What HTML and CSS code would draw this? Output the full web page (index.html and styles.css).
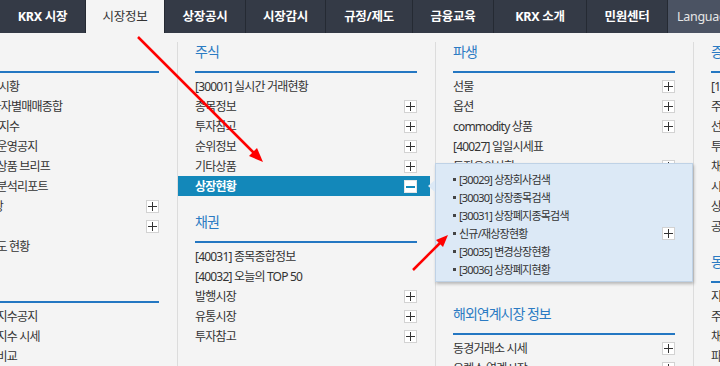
FILE: index.html
```html
<!DOCTYPE html>
<html lang="ko">
<head>
  <meta charset="UTF-8">
  <title>KRX 시장정보</title>
  <link rel="stylesheet" href="styles.css">
</head>
<body>

  <ul class="gnb">
    <li><a>KRX 시장</a></li>
    <li class="on"><a>시장정보</a></li>
    <li><a>상장공시</a></li>
    <li><a>시장감시</a></li>
    <li><a>규정/제도</a></li>
    <li><a>금융교육</a></li>
    <li><a>KRX 소개</a></li>
    <li><a>민원센터</a></li>
    <li class="lang"><a>Language</a></li>
  </ul>

  <div class="submenu">
    <div class="col">
      <div class="group">
        <h3>시장현황</h3>
        <ul>
          <li>[11001] 증시 시황</li>
          <li>시장전체 투자자별매매종합</li>
          <li>[11003] 주요 지수</li>
          <li>[11004] 지수운영공지</li>
          <li>[11005] 파생상품 브리프</li>
          <li>[11006] 시장분석리포트</li>
          <li>해외 주요 시장<i class="tg"></i></li>
          <li>통계정보<i class="tg"></i></li>
          <li>[11009] 공매도 현황</li>
        </ul>
      </div>
      <div class="group">
        <h3>지수</h3>
        <ul>
          <li>[11011] 신규지수공지</li>
          <li>[11012] 해외지수 시세</li>
          <li>[11013] 지수비교</li>
        </ul>
      </div>
    </div>

    <div class="col">
      <div class="group">
        <h3>주식</h3>
        <ul>
          <li>[30001] 실시간 거래현황</li>
          <li>종목정보<i class="tg"></i></li>
          <li>투자참고<i class="tg"></i></li>
          <li>순위정보<i class="tg"></i></li>
          <li>기타상품<i class="tg"></i></li>
          <li class="active">상장현황<i class="tg minus"></i>
            <div class="layer">
              <ul>
                <li>[30029] 상장회사검색</li>
                <li>[30030] 상장종목검색</li>
                <li>[30031] 상장폐지종목검색</li>
                <li>신규/재상장현황<i class="tg"></i></li>
                <li>[30035] 변경상장현황</li>
                <li>[30036] 상장폐지현황</li>
              </ul>
            </div>
          </li>
        </ul>
      </div>
      <div class="group">
        <h3>채권</h3>
        <ul>
          <li>[40031] 종목종합정보</li>
          <li>[40032] 오늘의 TOP 50</li>
          <li>발행시장<i class="tg"></i></li>
          <li>유통시장<i class="tg"></i></li>
          <li>투자참고<i class="tg"></i></li>
        </ul>
      </div>
    </div>

    <div class="col">
      <div class="group">
        <h3>파생</h3>
        <ul>
          <li>선물<i class="tg"></i></li>
          <li>옵션<i class="tg"></i></li>
          <li>commodity 상품<i class="tg"></i></li>
          <li>[40027] 일일시세표</li>
          <li>투자유의사항<i class="tg"></i></li>
          <li>[40028] 투자자별 거래실적</li>
          <li>[40029] 전체 종목 시세</li>
          <li>파생상품 통계<i class="tg"></i></li>
          <li>[40030] 야간시장 현황</li>
          <li>KRX 파생 지수<i class="tg"></i></li>
        </ul>
      </div>
      <div class="group overseas">
        <h3>해외연계시장 정보</h3>
        <ul>
          <li>동경거래소 시세<i class="tg"></i></li>
          <li>유렉스 연계시장<i class="tg"></i></li>
        </ul>
      </div>
    </div>

    <div class="col">
      <div class="group">
        <h3>증권통계</h3>
        <ul>
          <li>[10001] 통계 시세</li>
          <li>주식</li>
          <li>선물</li>
          <li>투자자</li>
          <li>채권</li>
          <li>시장</li>
          <li>상장</li>
          <li>공시</li>
        </ul>
      </div>
      <div class="group">
        <h3>동향분석</h3>
        <ul>
          <li>지수</li>
          <li>주식</li>
          <li>채권</li>
          <li>파생</li>
        </ul>
      </div>
    </div>
  </div>

  <!-- red annotation arrows -->
  <svg class="marks" width="720" height="366" viewBox="0 0 720 366">
    <line x1="138" y1="37" x2="254" y2="153" stroke="#f00" stroke-width="2.5"/>
    <polygon points="263,162 249,156 257,148" fill="#f00"/>
    <line x1="413" y1="270" x2="441" y2="242" stroke="#f00" stroke-width="2.5"/>
    <polygon points="448,235 443,247 436,240" fill="#f00"/>
  </svg>

</body>
</html>
```

FILE: styles.css
```css
html, body {
  margin: 0;
  height: 100%;
  overflow: hidden;
}

body {
  position: relative;
  background: #f4f4f4;
  font-family: "Noto Sans", "Noto Sans CJK KR", sans-serif;
  font-size: 12px;
  letter-spacing: -0.8px;
  color: #333;
}

ul {
  list-style: none;
  margin: 0;
  padding: 0;
}

/* top navigation */
.gnb {
  display: flex;
  height: 33px;
  background: #343a46;
}

.gnb li {
  flex: none;
  box-sizing: border-box;
  border-right: 1px solid #252a33;
  text-align: center;
}

.gnb li:nth-child(1) { width: 86px; }
.gnb li:nth-child(2) { width: 79px; }
.gnb li:nth-child(3) { width: 81px; }
.gnb li:nth-child(4) { width: 80px; }
.gnb li:nth-child(5) { width: 87px; }
.gnb li:nth-child(6) { width: 81px; }
.gnb li:nth-child(7) { width: 93px; }
.gnb li:nth-child(8) { width: 81px; }

.gnb a {
  display: block;
  line-height: 33px;
  color: #fff;
  font-size: 12.5px;
  font-weight: bold;
  letter-spacing: -0.3px;
  white-space: nowrap;
}

.gnb .on a {
  background: #f4f4f4;
  color: #333;
  font-weight: normal;
}

.gnb .lang {
  flex: 1;
  border: 0;
  background: #4b5363;
  text-align: left;
}

.gnb .lang a {
  padding-left: 9px;
  color: #e6e6e6;
  font-weight: normal;
}

/* dropdown panel */
.submenu {
  display: flex;
  min-height: 340px;
  margin-left: -81px;
  padding-top: 9px;
}

.col {
  flex: none;
  width: 222px;
  padding: 0 18px 0 17px;
  border-left: 1px solid #dcdcdc;
}

.group + .group {
  margin-top: 16px;
}

.group.overseas {
  margin-top: 28px;
}

.group h3 {
  margin: 0;
  padding-bottom: 9px;
  border-bottom: 2px solid #2477c2;
  line-height: 20px;
  font-size: 14px;
  font-weight: normal;
  letter-spacing: -1px;
  color: #2b7bc3;
  white-space: nowrap;
}

.group ul {
  margin-top: 3px;
}

.group li {
  display: flex;
  align-items: center;
  height: 20px;
  white-space: nowrap;
}

.group li.active {
  position: relative;
  margin: 0 -13px 0 -17px;
  padding: 0 13px 0 17px;
  background: #1388ba;
  color: #fff;
  font-weight: bold;
}

.tg {
  flex: none;
  width: 13px;
  height: 13px;
  box-sizing: border-box;
  margin: 1px 0 0 auto;
  border: 1px solid #d2d2d2;
  background:
    linear-gradient(#333, #333) center / 9px 1px no-repeat,
    linear-gradient(#333, #333) center / 1px 9px no-repeat,
    #fff;
}

.tg.minus {
  border-color: #e6e6e6;
  background:
    linear-gradient(#1388ba, #1388ba) center / 9px 2px no-repeat,
    #fff;
}

/* sub layer of 상장현황 */
.layer {
  position: absolute;
  left: calc(100% + 5px);
  top: -13px;
  z-index: 10;
  width: 222px;
  padding: 6px 17px 3px;
  background: #dce9f6;
  border: 1px solid #bfd2e6;
  box-shadow: 1px 2px 3px rgba(0, 0, 0, 0.25);
  color: #333;
  font-size: 11px;
  font-weight: normal;
}

.layer::before {
  content: "";
  position: absolute;
  left: -8px;
  top: 16px;
  border-style: solid;
  border-width: 6.5px 7px 6.5px 0;
  border-color: transparent #dce9f6 transparent transparent;
}

.layer ul {
  margin: 0;
}

.layer li {
  height: 18px;
}

.layer li::before {
  content: "";
  flex: none;
  width: 3px;
  height: 3px;
  margin-right: 3px;
  background: #444;
}

.marks {
  position: absolute;
  left: 0;
  top: 0;
  z-index: 20;
  pointer-events: none;
}
```
